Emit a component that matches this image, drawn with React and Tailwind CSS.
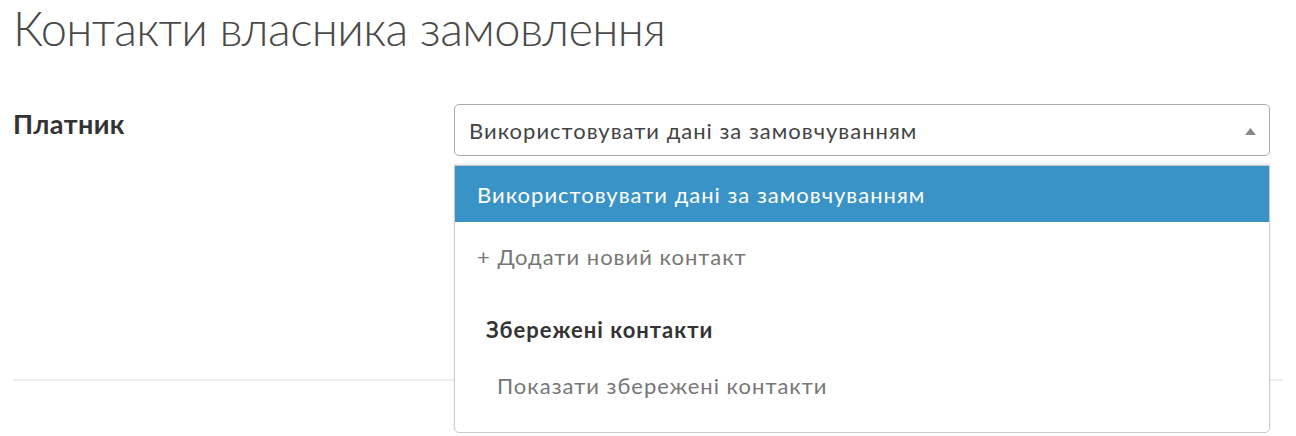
import { useState } from "react";

const options = [
  "Використовувати дані за замовчуванням",
];

const App = () => {
  const [isOpen] = useState(true);

  return (
    <div className="min-h-[436px] bg-white px-[13px] font-['Lato','Noto_Sans',sans-serif] text-[#444]">
      {/* Page title */}
      <h1 className="text-[47px] font-light leading-[1.2] tracking-[-0.6px] text-[#4a4a4a]">
        Контакти власника замовлення
      </h1>

      {/* Payer row */}
      <div className="mt-[48px] flex items-start">
        <div className="w-[441px] pt-[4px] text-[27px] font-bold leading-[1.2] tracking-[0.4px] text-[#333]">
          Платник
        </div>
        <div className="relative w-[816px]">
          <button className="flex h-[52px] w-full items-center justify-between rounded-[5px] border border-[#aaa] bg-white pl-[14px] pr-[13px] text-left text-[22px] tracking-[1px] text-[#444]">
            <span>{options[0]}</span>
            <svg width="11" height="7" viewBox="0 0 11 7" className="mt-[2px]">
              <polygon points="0,7 5.5,0 11,7" fill="#888" />
            </svg>
          </button>

          {isOpen && (
            <div className="absolute left-0 top-[61px] z-10 h-[268px] w-full overflow-hidden rounded-b-[5px] border border-[#ccc] bg-white shadow-[0_-1px_2px_rgba(0,0,0,0.12)]">
              <ul className="text-[22px] tracking-[1px]">
                <li className="flex h-[56px] items-center bg-[#3a93c6] pl-[22px] text-white">
                  Використовувати дані за замовчуванням
                </li>
                <li className="flex h-[68px] items-center pl-[22px] text-[#777]">
                  + Додати новий контакт
                </li>
                <li className="mt-[11px]">
                  <div className="flex h-[56px] items-center pl-[31px] font-bold text-[#333]">
                    Збережені контакти
                  </div>
                  <ul>
                    <li className="flex h-[56px] items-center pl-[42px] text-[#777]">
                      Показати збережені контакти
                    </li>
                  </ul>
                </li>
              </ul>
            </div>
          )}
        </div>
      </div>

      {/* Section divider */}
      <div className="mt-[223px] border-t-2 border-[#eee]" />
    </div>
  );
};

export default App;
